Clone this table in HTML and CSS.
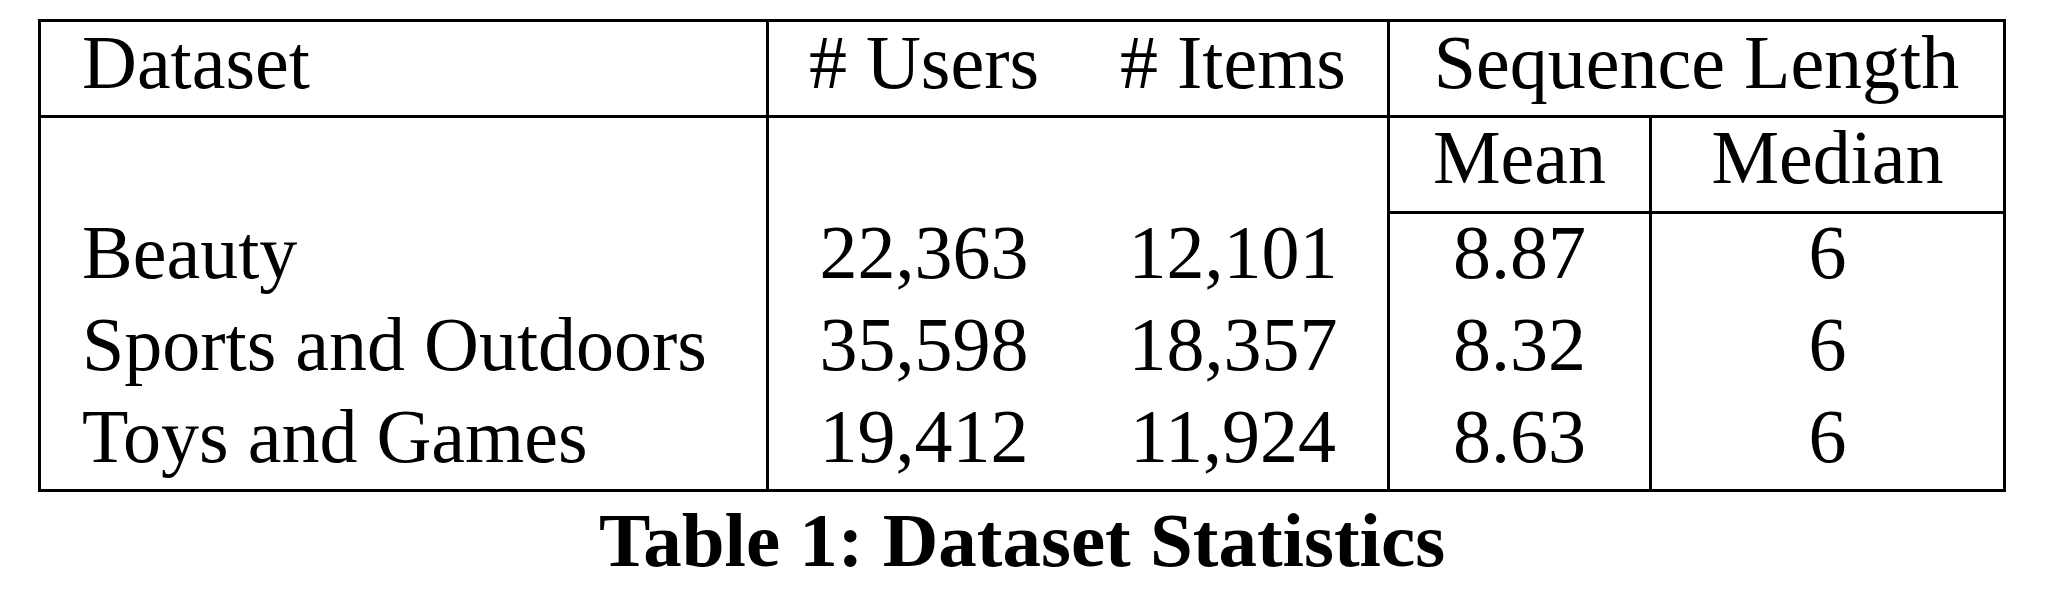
FILE: index.html
```html
<!DOCTYPE html>
<html lang="en">
<head>
<meta charset="utf-8">
<title>Table 1: Dataset Statistics</title>
<link rel="stylesheet" href="styles.css">
</head>
<body>
<figure class="figure">
  <table class="stats">
    <colgroup>
      <col class="c-name">
      <col class="c-users">
      <col class="c-items">
      <col class="c-mean">
      <col class="c-median">
    </colgroup>
    <thead>
      <tr class="row-head">
        <th class="name bb br">Dataset</th>
        <th class="num bb">&#35; Users</th>
        <th class="num bb br">&#35; Items</th>
        <th class="num bb" colspan="2">Sequence Length</th>
      </tr>
      <tr class="row-sub">
        <th class="name br"></th>
        <th class="num"></th>
        <th class="num br"></th>
        <th class="num bb br">Mean</th>
        <th class="num bb">Median</th>
      </tr>
    </thead>
    <tbody>
      <tr class="row-data">
        <td class="name br">Beauty</td>
        <td class="num">22,363</td>
        <td class="num br">12,101</td>
        <td class="num br">8.87</td>
        <td class="num">6</td>
      </tr>
      <tr class="row-data">
        <td class="name br">Sports and Outdoors</td>
        <td class="num">35,598</td>
        <td class="num br">18,357</td>
        <td class="num br">8.32</td>
        <td class="num">6</td>
      </tr>
      <tr class="row-data">
        <td class="name br">Toys and Games</td>
        <td class="num">19,412</td>
        <td class="num br">11,924</td>
        <td class="num br">8.63</td>
        <td class="num">6</td>
      </tr>
    </tbody>
  </table>
  <figcaption class="caption">Table 1: Dataset Statistics</figcaption>
</figure>
</body>
</html>
```

FILE: styles.css
```css
html, body {
  margin: 0;
  padding: 0;
  background: #ffffff;
}

body {
  font-family: "Liberation Serif", "Times New Roman", serif;
  color: #000000;
}

.figure {
  margin: 0;
  padding: 19px 0 0 38px;
  width: 1968px;
}

.stats {
  box-sizing: border-box;
  width: 1968px;
  table-layout: fixed;
  border-collapse: separate;
  border-spacing: 0;
  border: 3px solid #000;
  font-size: 76px;
  line-height: 76px;
}

.c-name { width: 728px; }
.c-users { width: 310px; }
.c-items { width: 311px; }
.c-mean { width: 262px; }
.c-median { width: 351px; }

.stats th,
.stats td {
  box-sizing: border-box;
  padding: 0;
  font-weight: normal;
  vertical-align: top;
  white-space: nowrap;
  border: 0 solid #000;
}

.stats .name {
  text-align: left;
  padding-left: 41px;
}

.stats .num {
  text-align: center;
}

.stats .br {
  border-right-width: 3px;
}

.stats .bb {
  border-bottom-width: 3px;
}

.row-head {
  height: 96px;
}

.row-head th {
  padding-top: 2px;
}

.row-sub {
  height: 96px;
}

.row-sub th {
  padding-top: 1px;
}

.row-data {
  height: 92px;
}

.row-data:last-child {
  height: 91px;
}

.caption {
  margin-top: 10px;
  text-align: center;
  font-weight: bold;
  font-size: 77px;
  line-height: 77px;
}
```
